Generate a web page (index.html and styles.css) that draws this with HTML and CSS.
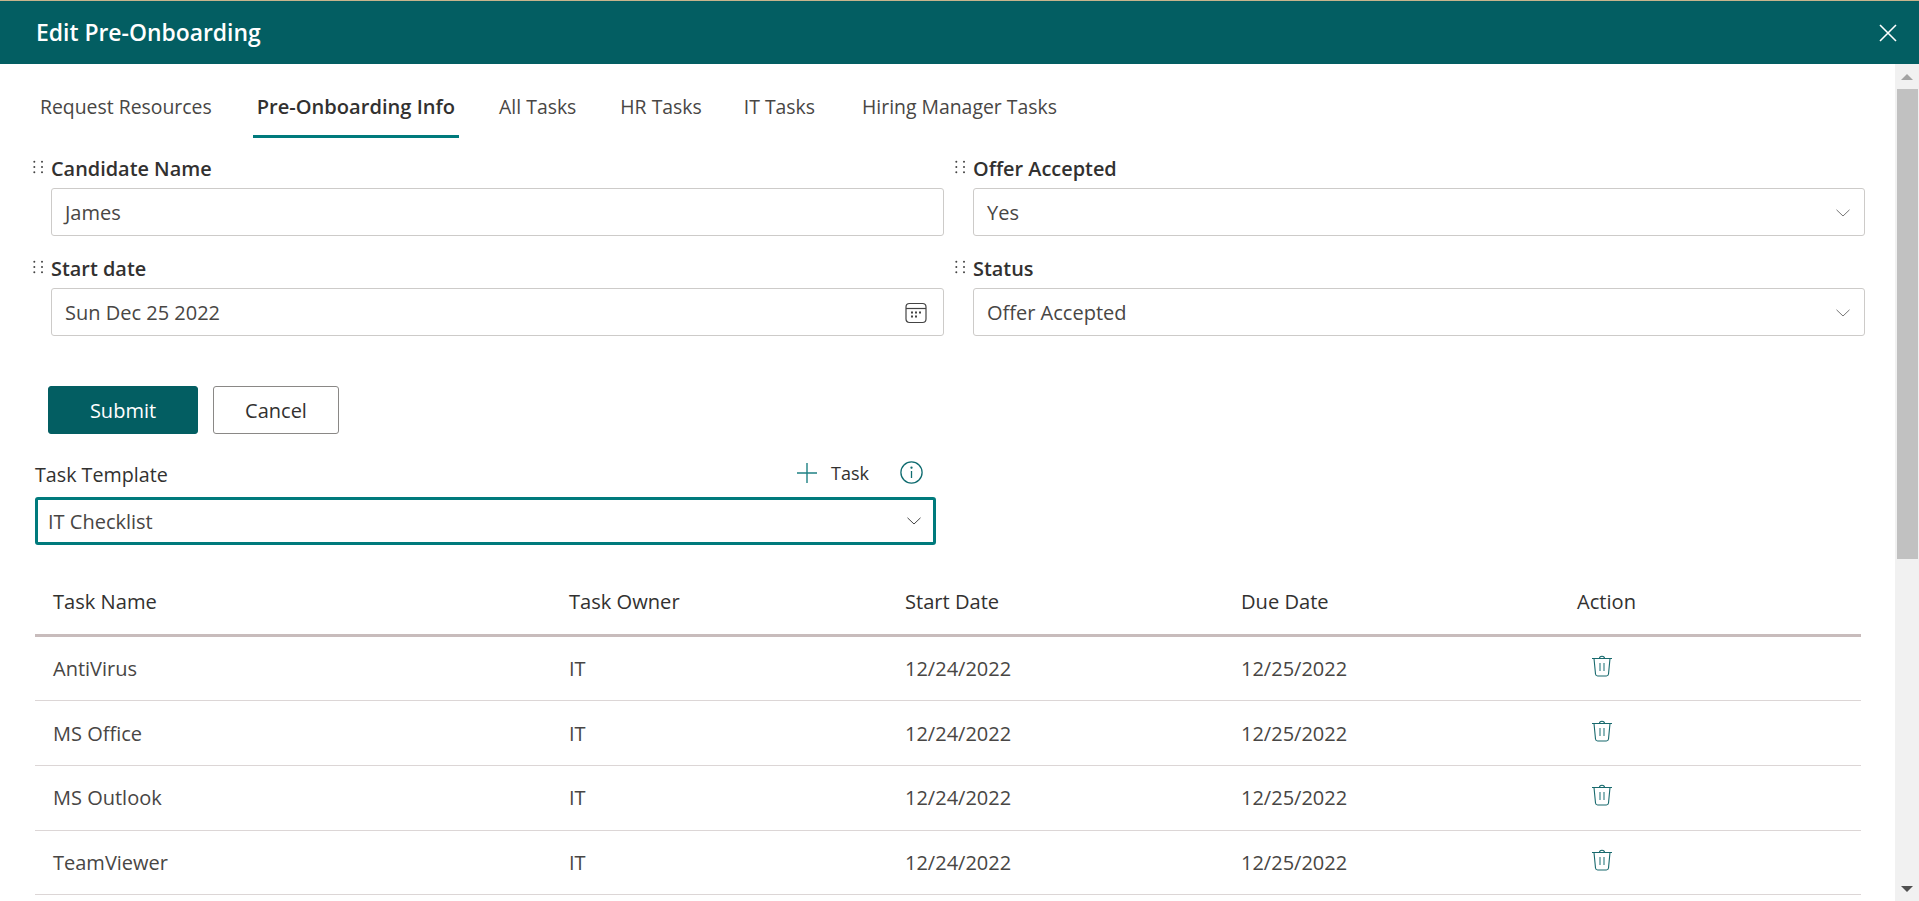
FILE: index.html
```html
<!DOCTYPE html>
<html lang="en">
<head>
    <meta charset="UTF-8">
    <meta name="viewport" content="width=device-width, initial-scale=1.0">
    <title>Edit Pre-Onboarding</title>
    <link rel="stylesheet" href="styles.css">
</head>
<body>
    <header class="panel-header">
        <h1>Edit Pre-Onboarding</h1>
        <svg class="close-icon" width="18" height="18" viewBox="0 0 18 18"><path d="M1 1l16 16M17 1L1 17" stroke="#fff" stroke-width="1.6" fill="none"/></svg>
    </header>
    <div class="panel-body">
        <main class="content">
            <nav class="tabs">
                <a class="tab tab-first">Request Resources</a>
                <a class="tab tab-active">Pre-Onboarding Info</a>
                <a class="tab">All Tasks</a>
                <a class="tab tab-hr">HR Tasks</a>
                <a class="tab tab-it">IT Tasks</a>
                <a class="tab">Hiring Manager Tasks</a>
            </nav>

            <div class="form-grid">
                <div class="field">
                    <label class="field-label"><svg class="grip" width="10" height="15" viewBox="0 0 10 15" fill="#444"><circle cx="1.3" cy="1.7" r="1"/><circle cx="9" cy="1.7" r="1"/><circle cx="1.3" cy="7" r="1"/><circle cx="9" cy="7" r="1"/><circle cx="1.3" cy="12.3" r="1"/><circle cx="9" cy="12.3" r="1"/></svg>Candidate Name</label>
                    <div class="input">James</div>
                </div>
                <div class="field">
                    <label class="field-label"><svg class="grip" width="10" height="15" viewBox="0 0 10 15" fill="#444"><circle cx="1.3" cy="1.7" r="1"/><circle cx="9" cy="1.7" r="1"/><circle cx="1.3" cy="7" r="1"/><circle cx="9" cy="7" r="1"/><circle cx="1.3" cy="12.3" r="1"/><circle cx="9" cy="12.3" r="1"/></svg>Offer Accepted</label>
                    <div class="input">Yes
                        <svg class="chevron" width="14" height="8" viewBox="0 0 14 8"><path d="M.5.8L7 7l6.5-6.2" stroke="#777" stroke-width="1" fill="none"/></svg>
                    </div>
                </div>
                <div class="field">
                    <label class="field-label"><svg class="grip" width="10" height="15" viewBox="0 0 10 15" fill="#444"><circle cx="1.3" cy="1.7" r="1"/><circle cx="9" cy="1.7" r="1"/><circle cx="1.3" cy="7" r="1"/><circle cx="9" cy="7" r="1"/><circle cx="1.3" cy="12.3" r="1"/><circle cx="9" cy="12.3" r="1"/></svg>Start date</label>
                    <div class="input">Sun Dec 25 2022
                        <svg class="calendar" width="22" height="22" viewBox="0 0 22 22" fill="none" stroke="#444" stroke-width="1.2">
                            <rect x="1" y="1.5" width="20" height="19" rx="3.5"/>
                            <path d="M1 6.5h20"/>
                            <path d="M6 10.5h2M10 10.5h2M14 10.5h2M6 14.5h2M10 14.5h2" stroke-width="1.8"/>
                        </svg>
                    </div>
                </div>
                <div class="field">
                    <label class="field-label"><svg class="grip" width="10" height="15" viewBox="0 0 10 15" fill="#444"><circle cx="1.3" cy="1.7" r="1"/><circle cx="9" cy="1.7" r="1"/><circle cx="1.3" cy="7" r="1"/><circle cx="9" cy="7" r="1"/><circle cx="1.3" cy="12.3" r="1"/><circle cx="9" cy="12.3" r="1"/></svg>Status</label>
                    <div class="input">Offer Accepted
                        <svg class="chevron" width="14" height="8" viewBox="0 0 14 8"><path d="M.5.8L7 7l6.5-6.2" stroke="#777" stroke-width="1" fill="none"/></svg>
                    </div>
                </div>
            </div>

            <div class="actions">
                <button class="btn btn-primary">Submit</button>
                <button class="btn">Cancel</button>
            </div>

            <section class="template">
                <div class="template-head">
                    <span class="template-label">Task Template</span>
                    <div class="template-tools">
                        <svg width="20" height="20" viewBox="0 0 20 20"><path d="M10 0v20M0 10h20" stroke="#1f8184" stroke-width="1.4" fill="none"/></svg>
                        <span class="add-task">Task</span>
                        <svg class="info-icon" width="23" height="23" viewBox="0 0 23 23" fill="none" stroke="#106c70" stroke-width="1.3">
                            <circle cx="11.5" cy="11.5" r="10.6"/>
                            <path d="M11.5 10v7"/>
                            <circle cx="11.5" cy="6.7" r=".5" fill="#106c70"/>
                        </svg>
                    </div>
                </div>
                <div class="template-select">IT Checklist
                    <svg class="chevron" width="14" height="8" viewBox="0 0 14 8"><path d="M.5.8L7 7l6.5-6.2" stroke="#444" stroke-width="1" fill="none"/></svg>
                </div>
            </section>

            <table class="task-table">
                <thead>
                    <tr>
                        <th>Task Name</th>
                        <th>Task Owner</th>
                        <th>Start Date</th>
                        <th>Due Date</th>
                        <th>Action</th>
                    </tr>
                </thead>
                <tbody>
                    <tr>
                        <td>AntiVirus</td><td>IT</td><td>12/24/2022</td><td>12/25/2022</td>
                        <td><svg class="trash" width="20" height="22" viewBox="0 0 20 22" fill="none" stroke="#17696d" stroke-width="1.1"><path d="M0 3.5h20M7.5 3.5C7.5 .5 12.5 .5 12.5 3.5M2 3.5l1.5 15.5q.2 2 2.2 2h8.6q2 0 2.2-2L18 3.5"/><path d="M8 8v8M12 8v8" stroke="#6fa5a8" stroke-width="1.6"/></svg></td>
                    </tr>
                    <tr>
                        <td>MS Office</td><td>IT</td><td>12/24/2022</td><td>12/25/2022</td>
                        <td><svg class="trash" width="20" height="22" viewBox="0 0 20 22" fill="none" stroke="#17696d" stroke-width="1.1"><path d="M0 3.5h20M7.5 3.5C7.5 .5 12.5 .5 12.5 3.5M2 3.5l1.5 15.5q.2 2 2.2 2h8.6q2 0 2.2-2L18 3.5"/><path d="M8 8v8M12 8v8" stroke="#6fa5a8" stroke-width="1.6"/></svg></td>
                    </tr>
                    <tr>
                        <td>MS Outlook</td><td>IT</td><td>12/24/2022</td><td>12/25/2022</td>
                        <td><svg class="trash" width="20" height="22" viewBox="0 0 20 22" fill="none" stroke="#17696d" stroke-width="1.1"><path d="M0 3.5h20M7.5 3.5C7.5 .5 12.5 .5 12.5 3.5M2 3.5l1.5 15.5q.2 2 2.2 2h8.6q2 0 2.2-2L18 3.5"/><path d="M8 8v8M12 8v8" stroke="#6fa5a8" stroke-width="1.6"/></svg></td>
                    </tr>
                    <tr>
                        <td>TeamViewer</td><td>IT</td><td>12/24/2022</td><td>12/25/2022</td>
                        <td><svg class="trash" width="20" height="22" viewBox="0 0 20 22" fill="none" stroke="#17696d" stroke-width="1.1"><path d="M0 3.5h20M7.5 3.5C7.5 .5 12.5 .5 12.5 3.5M2 3.5l1.5 15.5q.2 2 2.2 2h8.6q2 0 2.2-2L18 3.5"/><path d="M8 8v8M12 8v8" stroke="#6fa5a8" stroke-width="1.6"/></svg></td>
                    </tr>
                </tbody>
            </table>
        </main>

        <div class="scrollbar">
            <div class="scroll-arrow scroll-up"></div>
            <div class="scroll-thumb"></div>
            <div class="scroll-arrow scroll-down"></div>
        </div>
    </div>
</body>
</html>
```

FILE: styles.css
```css
html, body {
    height: 100%;
}
body {
    font-family: "Open Sans", "Noto Sans", Arial, sans-serif;
    font-size: 20px;
    color: #323130;
    margin: 0;
    overflow: hidden;
    display: flex;
    flex-direction: column;
}

/* header */
.panel-header {
    height: 63px;
    flex: none;
    background-color: #035e62;
    border-top: 1px solid #c8b48c;
    color: #fff;
    display: flex;
    align-items: center;
    justify-content: space-between;
    padding: 0 22px 0 36px;
}
.panel-header h1 {
    font-size: 22.9px;
    font-weight: 600;
    margin: 0;
}

/* body */
.panel-body {
    flex: 1;
    display: flex;
    min-height: 0;
}
.content {
    flex: 1;
    min-width: 0;
    overflow: hidden;
    padding: 0 34px 0 35px;
}

/* tabs */
.tabs {
    display: flex;
    height: 74px;
    padding-top: 12px;
    box-sizing: border-box;
}
.tab {
    padding: 19px 4px 0;
    height: 62px;
    box-sizing: border-box;
    margin-right: 36px;
    color: #484644;
    white-space: nowrap;
    line-height: 24px;
    font-size: 19.4px;
}
.tab-first {
    padding-left: 5px;
    margin-right: 37px;
}
.tab-active {
    font-weight: 550;
    font-size: 20.1px;
    color: #323130;
    border-bottom: 3px solid #007a7c;
}
.tab-hr {
    margin-right: 34px;
}
.tab-it {
    margin-right: 39px;
}

/* form */
.form-grid {
    display: grid;
    grid-template-columns: 909px 908px;
    column-gap: 13px;
    margin-top: 12px;
}
.field {
    height: 100px;
    padding-left: 16px;
    box-sizing: border-box;
}
.field-label {
    display: flex;
    align-items: center;
    position: relative;
    height: 38px;
    padding-bottom: 2px;
    box-sizing: border-box;
    font-weight: 550;
    font-size: 19.9px;
}
.grip {
    position: absolute;
    left: -18px;
    top: 10px;
}
.input {
    height: 48px;
    box-sizing: border-box;
    border: 1px solid #cdcbc9;
    border-radius: 3px;
    padding: 1px 13px 0;
    display: flex;
    align-items: center;
    justify-content: space-between;
    color: #484644;
}
.chevron {
    margin-right: 1px;
}
.calendar {
    margin-right: 3px;
}

/* buttons */
.actions {
    display: flex;
    gap: 15px;
    margin-top: 36px;
    padding-left: 13px;
}
.btn {
    height: 48px;
    width: 126px;
    font: 500 20px "Open Sans", "Noto Sans", Arial, sans-serif;
    color: #323130;
    background-color: #fff;
    border: 1px solid #8a8886;
    border-radius: 3px;
}
.btn-primary {
    width: 150px;
    color: #fff;
    background-color: #035e62;
    border-color: #035e62;
}

/* template picker */
.template {
    width: 901px;
    margin-top: 17px;
}
.template-head {
    display: flex;
    align-items: center;
    justify-content: space-between;
    height: 46px;
}
.template-label {
    font-weight: 500;
    font-size: 19.7px;
}
.template-tools {
    display: flex;
    align-items: center;
    margin-right: 13px;
    padding-bottom: 3px;
}
.add-task {
    margin: 0 31px 0 14px;
    font-size: 18px;
}
.template-select {
    height: 48px;
    box-sizing: border-box;
    border: 3px solid #007a7c;
    border-radius: 3px;
    padding: 0 10px;
    display: flex;
    align-items: center;
    justify-content: space-between;
    color: #484644;
}
.template-select .chevron {
    margin-right: 2px;
}

/* table */
.task-table {
    width: 1826px;
    border-collapse: collapse;
    table-layout: fixed;
    margin-top: 25px;
}
.task-table th:nth-child(1) { width: 516px; }
.task-table th:nth-child(2),
.task-table th:nth-child(3),
.task-table th:nth-child(4) { width: 336px; }
.task-table th {
    box-sizing: border-box;
    height: 65px;
    padding: 0 18px;
    text-align: left;
    font-weight: 500;
    font-size: 20.1px;
    border-bottom: 3px solid #c8bcbc;
}
.task-table td {
    height: 63.7px;
    padding: 0 18px;
    color: #484644;
    border-bottom: 1px solid #dcd6d6;
}
.trash {
    display: block;
    margin: -5px 0 0 15px;
}

/* scrollbar */
.scrollbar {
    width: 24px;
    flex: none;
    background-color: #f1f1f1;
    display: flex;
    flex-direction: column;
    align-items: center;
    position: relative;
}
.scroll-thumb {
    width: 21px;
    height: 470px;
    margin-left: 1px;
    background-color: #c1c1c1;
}
.scroll-arrow {
    width: 0;
    height: 0;
    border-left: 6px solid transparent;
    border-right: 6px solid transparent;
}
.scroll-up {
    border-bottom: 6px solid #a3a3a3;
    margin: 10px 0 9px;
}
.scroll-down {
    border-top: 6px solid #505050;
    position: absolute;
    bottom: 9px;
}
```
